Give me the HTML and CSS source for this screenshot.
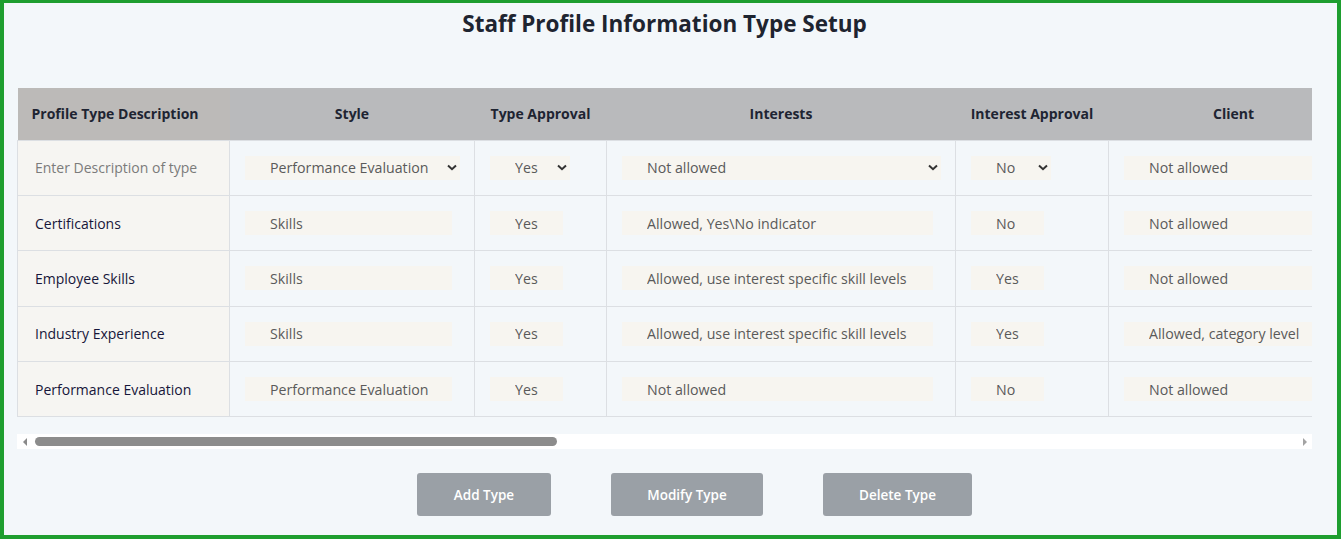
FILE: index.html
```html
<!DOCTYPE html>
<html lang="en">
<head>
<meta charset="utf-8">
<title>Staff Profile Information Type Setup</title>
<link rel="stylesheet" href="styles.css">
</head>
<body>
<div class="frame">
  <h1 class="title">Staff Profile Information Type Setup</h1>
  <div class="scroller">
    <table class="grid">
      <colgroup>
        <col class="c-desc"><col class="c-style"><col class="c-tappr"><col class="c-int"><col class="c-iappr"><col class="c-client"><col class="c-rest">
      </colgroup>
      <thead>
        <tr>
          <th class="th-desc">Profile Type Description</th>
          <th>Style</th>
          <th>Type Approval</th>
          <th>Interests</th>
          <th>Interest Approval</th>
          <th>Client</th>
          <th></th>
        </tr>
      </thead>
      <tbody>
        <tr>
          <td class="desc"><input class="desc-input" type="text" placeholder="Enter Description of type"></td>
          <td><select class="fld sel w-style"><option>Performance Evaluation</option><option>Skills</option></select></td>
          <td><select class="fld sel w-small"><option>Yes</option><option>No</option></select></td>
          <td><select class="fld sel w-int"><option>Not allowed</option><option>Allowed, Yes\No indicator</option><option>Allowed, use interest specific skill levels</option></select></td>
          <td><select class="fld sel w-small"><option>No</option><option>Yes</option></select></td>
          <td><input class="fld w-client" type="text" value="Not allowed" readonly></td>
          <td></td>
        </tr>
        <tr>
          <td class="desc">Certifications</td>
          <td><input class="fld w-style" type="text" value="Skills" readonly></td>
          <td><input class="fld w-small" type="text" value="Yes" readonly></td>
          <td><input class="fld w-int" type="text" value="Allowed, Yes\No indicator" readonly></td>
          <td><input class="fld w-small" type="text" value="No" readonly></td>
          <td><input class="fld w-client" type="text" value="Not allowed" readonly></td>
          <td></td>
        </tr>
        <tr>
          <td class="desc">Employee Skills</td>
          <td><input class="fld w-style" type="text" value="Skills" readonly></td>
          <td><input class="fld w-small" type="text" value="Yes" readonly></td>
          <td><input class="fld w-int" type="text" value="Allowed, use interest specific skill levels" readonly></td>
          <td><input class="fld w-small" type="text" value="Yes" readonly></td>
          <td><input class="fld w-client" type="text" value="Not allowed" readonly></td>
          <td></td>
        </tr>
        <tr>
          <td class="desc">Industry Experience</td>
          <td><input class="fld w-style" type="text" value="Skills" readonly></td>
          <td><input class="fld w-small" type="text" value="Yes" readonly></td>
          <td><input class="fld w-int" type="text" value="Allowed, use interest specific skill levels" readonly></td>
          <td><input class="fld w-small" type="text" value="Yes" readonly></td>
          <td><input class="fld w-client" type="text" value="Allowed, category level" readonly></td>
          <td></td>
        </tr>
        <tr>
          <td class="desc">Performance Evaluation</td>
          <td><input class="fld w-style" type="text" value="Performance Evaluation" readonly></td>
          <td><input class="fld w-small" type="text" value="Yes" readonly></td>
          <td><input class="fld w-int" type="text" value="Not allowed" readonly></td>
          <td><input class="fld w-small" type="text" value="No" readonly></td>
          <td><input class="fld w-client" type="text" value="Not allowed" readonly></td>
          <td></td>
        </tr>
      </tbody>
    </table>
  </div>
  <div class="hscroll" aria-hidden="true">
    <span class="hs-btn"><span class="tri tri-left"></span></span>
    <span class="hs-track"><span class="hs-thumb"></span></span>
    <span class="hs-btn"><span class="tri tri-right"></span></span>
  </div>
  <div class="actions">
    <button class="btn btn-add" type="button">Add Type</button>
    <button class="btn btn-modify" type="button">Modify Type</button>
    <button class="btn btn-delete" type="button">Delete Type</button>
  </div>
</div>
</body>
</html>
```

FILE: styles.css
```css
* { box-sizing: border-box; }

html, body {
  margin: 0;
  padding: 0;
}

body {
  font-family: "Open Sans", "Noto Sans", sans-serif;
  color: #1d2030;
}

.frame {
  width: 1341px;
  height: 539px;
  border: 4px solid #1e9e2f;
  border-top-width: 3px;
  background: #f3f7fa;
  overflow: hidden;
}

.title {
  margin: 0;
  padding: 6px 12px 0 0;
  font-size: 22.5px;
  line-height: 29px;
  font-weight: 700;
  text-align: center;
  color: #1e2430;
}

.scroller {
  margin: 50px 25px 0 13px;
  overflow: hidden;
}

.grid {
  border-collapse: collapse;
  table-layout: fixed;
  width: 3102px;
}

.c-desc { width: 212px; }
.c-style { width: 245px; }
.c-tappr { width: 132px; }
.c-int { width: 349px; }
.c-iappr { width: 153px; }
.c-client { width: 250px; }
.c-rest { width: 1761px; }

.grid th {
  height: 52px;
  background: #b9babc;
  font-size: 14px;
  font-weight: 700;
  color: #1e2432;
  text-align: center;
  padding: 0;
  border: none;
}
.grid th.th-desc {
  background: #bcbab8;
  text-align: left;
  padding-left: 14px;
}

.grid td {
  height: 55.4px;
  padding: 0 0 0 15px;
  border: 1px solid #dcdfe3;
  vertical-align: middle;
}
.grid td.desc {
  background: #f6f5f2;
  padding-left: 17px;
  font-size: 14px;
  color: #16163a;
}

.desc-input {
  border: none;
  background: transparent;
  padding: 0;
  font-family: inherit;
  font-size: 14px;
  color: #16163a;
  width: 180px;
}
.desc-input::placeholder {
  color: #7b7b7b;
}

.fld {
  display: block;
  height: 24px;
  border: none;
  outline: none;
  background: #f7f5f0;
  padding: 0 0 0 25px;
  font-family: inherit;
  font-size: 14.2px;
  color: #5a5a5a;
  border-radius: 0;
}
.sel {
  appearance: none;
  -webkit-appearance: none;
  background: #f7f5f0 url("data:image/svg+xml;utf8,<svg xmlns='http://www.w3.org/2000/svg' width='10' height='7'><path d='M1 1.5 L5 5.2 L9 1.5' fill='none' stroke='%23333333' stroke-width='2'/></svg>") no-repeat right 3px center;
}

.w-style { width: 207px; }
.sel.w-style { width: 215px; }
.w-small { width: 73px; }
.sel.w-small { width: 80px; }
.w-int { width: 311px; }
.sel.w-int { width: 319px; }
.w-client { width: 230px; }

/* horizontal scrollbar of the grid */
.hscroll {
  display: flex;
  height: 15px;
  margin: 17px 25px 0 13px;
  background: #ffffff;
}
.hs-btn {
  flex: 0 0 15px;
  display: flex;
  align-items: center;
  justify-content: center;
}
.tri {
  width: 0;
  height: 0;
  border-top: 4px solid transparent;
  border-bottom: 4px solid transparent;
}
.tri-left { border-right: 4px solid #8a8a8a; }
.tri-right { border-left: 4px solid #a3a3a3; }
.hs-track {
  flex: 1;
  padding: 3px;
}
.hs-thumb {
  display: block;
  width: 522px;
  height: 9px;
  border-radius: 5px;
  background: #8c8c8c;
}

.actions {
  display: flex;
  justify-content: center;
  gap: 60px;
  margin-top: 24px;
  padding-left: 48px;
}

.btn {
  height: 43px;
  border: none;
  border-radius: 3px;
  background: #9aa0a6;
  color: #ffffff;
  font-family: inherit;
  font-size: 13.5px;
  font-weight: 600;
}
.btn-add { width: 134px; }
.btn-modify { width: 152px; }
.btn-delete { width: 149px; }
```
